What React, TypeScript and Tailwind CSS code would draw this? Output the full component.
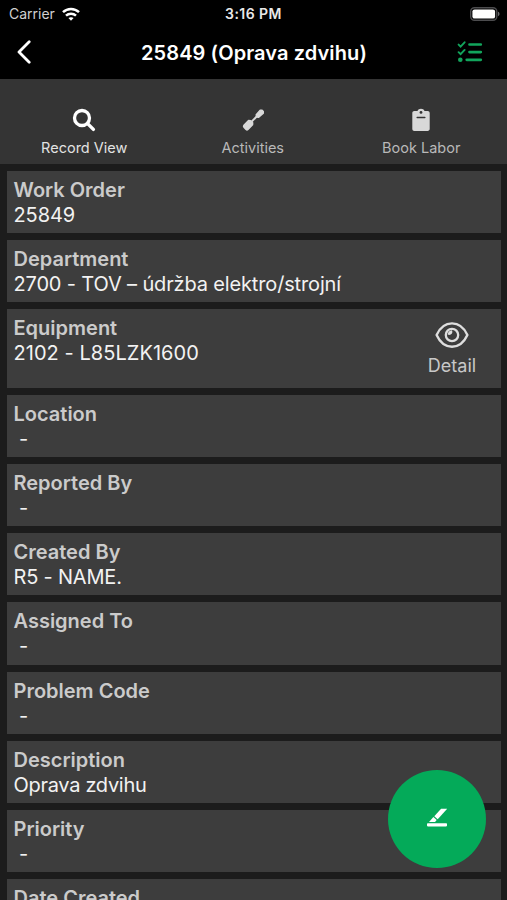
import type { ReactNode } from 'react'

type Field = {
  label: string
  value?: string
  className?: string
  detail?: boolean
}

// className nudges the tracking of the value line
const fields: Field[] = [
  { label: 'Work Order', value: '25849' },
  { label: 'Department', value: '2700 - TOV – údržba elektro/strojní', className: 'tracking-[-0.15px]' },
  { label: 'Equipment', value: '2102 - L85LZK1600', className: 'tracking-[0.05px]', detail: true },
  { label: 'Location' },
  { label: 'Reported By' },
  { label: 'Created By', value: 'R5 - NAME.', className: 'tracking-[-0.2px]' },
  { label: 'Assigned To' },
  { label: 'Problem Code' },
  { label: 'Description', value: 'Oprava zdvihu', className: 'tracking-[-0.3px]' },
  { label: 'Priority' },
  { label: 'Date Created' },
]

function WifiIcon() {
  return (
    <svg className="w-[18px] h-[14px]" viewBox="0 0 18 14" fill="none" stroke="#fff" strokeWidth="2.5">
      <path d="M1 5.2C5.5 .9 12.5 .9 17 5.2" />
      <path d="M4 8.6c2.8-2.6 7.2-2.6 10 0" />
      <path d="M6.4 11.1L9 13.7l2.6-2.6c-1.5-1.3-3.7-1.3-5.2 0z" fill="#fff" stroke="none" />
    </svg>
  )
}

function BatteryIcon() {
  return (
    <svg className="w-[30px] h-[14px]" viewBox="0 0 30 14">
      <rect x=".7" y=".7" width="26.1" height="12.6" rx="3.8" fill="none" stroke="#4c4c4e" strokeWidth="1.4" />
      <rect x="2.4" y="2.4" width="22.7" height="9.2" rx="2.2" fill="#fff" />
      <path d="M28 4.8c2 .6 2 3.8 0 4.4z" fill="#6b6b6d" />
    </svg>
  )
}

function ChecklistIcon() {
  return (
    <svg className="w-[26px] h-[22px]" viewBox="0 0 26 22" fill="none" stroke="#12a55c" strokeLinecap="round">
      <path d="M12.5 3.5h11.3M12.5 11.1h11.3M9.7 18.8h14.1" strokeWidth="2.7" />
      <path d="M1.6 3.6l2 2 4-4.3M1.6 11.2l2 2 4-4.3" strokeWidth="1.9" />
      <circle cx="3.3" cy="18.8" r="2.3" fill="#12a55c" stroke="none" />
    </svg>
  )
}

function SearchIcon() {
  return (
    <svg className="w-6 h-6" viewBox="0 0 24 24" fill="none" stroke="#fff" strokeLinecap="round">
      <circle cx="10" cy="10" r="7.5" strokeWidth="3.3" />
      <path d="M15.6 15.6l5.8 5.8" strokeWidth="3.4" />
    </svg>
  )
}

function ScrewdriverIcon() {
  return (
    <svg className="w-6 h-6" viewBox="0 0 24 24" fill="#d8d8d8" stroke="#d8d8d8" strokeLinejoin="round">
      <path d="M3 17.2l4.6-4.6 2 .1 2 2-.1 2.1-4.6 4.6q-.9.8-1.8 0L3 19.2q-.8-1 0-2z" strokeWidth="1.6" />
      <path d="M10.2 14.1l5.2-5.4" strokeWidth="2" />
      <path d="M15.2 6.8l4-4.7h1.9l1.2 1.3v1.8l-4.6 4.1-2.2-.2z" strokeWidth="1.4" />
    </svg>
  )
}

function ClipboardIcon() {
  return (
    <svg className="w-6 h-6" viewBox="0 0 24 24">
      <path
        d="M5.3 2.9h3.2C9 1.6 10.4.8 12 .8s3 .8 3.5 2.1h3.2c1.1 0 2 .9 2 2v16.2c0 1-.9 1.9-2 1.9H5.3c-1.1 0-2-.9-2-2V4.8c0-1 .9-1.9 2-1.9z"
        fill="#d8d8d8"
      />
      <circle cx="12" cy="4.4" r="1.4" fill="#343434" />
      <path d="M8.2 9.5h7.6" stroke="#343434" strokeWidth="1.5" strokeLinecap="round" />
    </svg>
  )
}

function EyeIcon() {
  return (
    <svg className="w-[34px] h-[27px]" viewBox="0 0 34 27" fill="none" stroke="#dedede">
      <path d="M1.6 13C5 5.6 10.5 1.4 17 1.4S29 5.6 32.4 13C29 20.4 23.5 24.7 17 24.7S5 20.4 1.6 13z" strokeWidth="2.4" strokeLinejoin="round" />
      <circle cx="17" cy="13" r="6.2" strokeWidth="2.3" />
      <path d="M12.6 12.6c.2-2.4 2-4.1 4.3-4.3 1.6 2.7-1.2 5.8-4.3 4.3z" fill="#dedede" stroke="none" />
    </svg>
  )
}

function EditIcon() {
  return (
    <svg className="w-5 h-[19px] mb-[3px]" viewBox="0 0 20 19" fill="#fff">
      <path d="M14.1.7h6.2l-9.6 10.6-3.4-3z" />
      <path d="M6.4 9l3.3 3-1.7 1.9H2z" />
      <rect x="0" y="15.3" width="20" height="3.1" rx=".8" />
    </svg>
  )
}

function Tab({ icon, label, className }: { icon: ReactNode; label: string; className: string }) {
  return (
    <div className={`w-[168.5px] flex flex-col items-center ${className}`}>
      {icon}
      <span className="mt-[6px] text-[14.5px] leading-5 whitespace-nowrap">{label}</span>
    </div>
  )
}

function FieldCard({ field }: { field: Field }) {
  return (
    <section
      className={`shrink-0 flex justify-between bg-[#3d3d3d] pl-[6.5px] pt-[7px] ${
        field.detail ? 'h-[78.5px]' : 'h-[62.25px]'
      }`}
    >
      <div className="whitespace-pre text-[20px] leading-[25px]">
        <h2 className="font-semibold text-[#cbcbcb]">{field.label}</h2>
        <p className={`text-[#f2f2f2] ${field.className ?? 'tracking-[-0.1px]'}`}>{field.value ?? ' -'}</p>
      </div>
      {field.detail && (
        <button className="w-[98px] pt-[6px] flex flex-col items-center text-[#c8c8c8]">
          <EyeIcon />
          <span className="mt-[5px] text-[18px] leading-6">Detail</span>
        </button>
      )}
    </section>
  )
}

export default function App() {
  return (
    <div className="w-[507px] h-[900px] relative overflow-hidden flex flex-col bg-[#1c1c1c] font-['Inter','Liberation_Sans',sans-serif]">
      <header className="h-[79px] shrink-0 bg-black text-white">
        <div className="h-[27px] px-[7px] grid grid-cols-[1fr_auto_1fr] items-center text-[14px]">
          <div className="pl-[2px] flex items-center gap-[7px]">
            <span className="text-[#d0d0d0]">Carrier</span>
            <WifiIcon />
          </div>
          <span className="font-semibold tracking-[0.45px] text-[#e8e8e8]">3:16 PM</span>
          <div className="flex justify-end">
            <BatteryIcon />
          </div>
        </div>
        <div className="h-[50px] pl-4 pr-6 grid grid-cols-[34px_1fr_26px] items-center">
          <svg className="w-4 h-6" viewBox="0 0 16 24" fill="none" stroke="#fff" strokeWidth="2.8" strokeLinecap="round" strokeLinejoin="round">
            <path d="M13.2 1.8L3 12l10.2 10.2" />
          </svg>
          <h1 className="pt-px pl-px text-center text-[20px] font-semibold tracking-[0.1px]">25849 (Oprava zdvihu)</h1>
          <ChecklistIcon />
        </div>
      </header>
      <nav className="h-[85px] shrink-0 pt-[29px] flex bg-[#343434]">
        <Tab icon={<SearchIcon />} label="Record View" className="text-[#e2e2e2]" />
        <Tab icon={<ScrewdriverIcon />} label="Activities" className="text-[#b9b9b9]" />
        <Tab icon={<ClipboardIcon />} label="Book Labor" className="text-[#b9b9b9]" />
      </nav>
      <main className="pt-[6.5px] pl-[7px] pr-[6px] flex flex-col gap-[7px]">
        {fields.map(field => (
          <FieldCard key={field.label} field={field} />
        ))}
      </main>
      <button className="absolute left-[388px] top-[770px] w-[98px] h-[98px] rounded-full bg-[#04aa59] flex items-center justify-center">
        <EditIcon />
      </button>
    </div>
  )
}
